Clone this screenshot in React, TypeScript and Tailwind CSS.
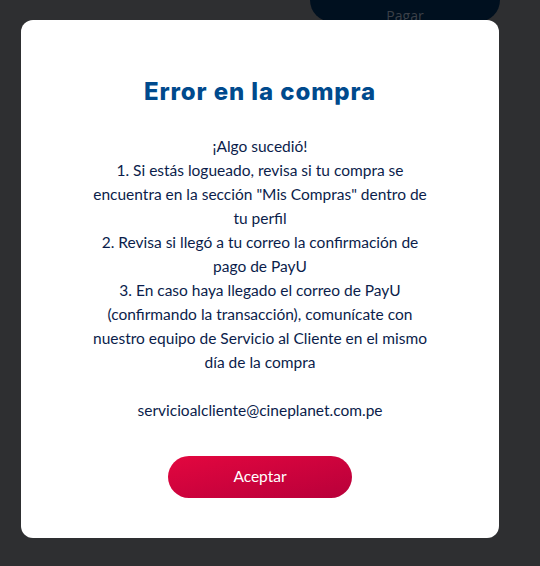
import React from 'react';

const ErrorModal: React.FC = () => {
  return (
    <div className="absolute left-[21px] top-[20px] w-[478px] rounded-[12px] bg-white pt-[56px] pb-[40px] flex flex-col items-center">
      <h2 className="font-['Inter','Open_Sans',sans-serif] text-[24px] leading-[32px] font-extrabold text-[#004a8d] tracking-[0.9px]">
        Error en la compra
      </h2>
      <p className="mt-[26px] w-[344px] text-center font-['Lato','Open_Sans',sans-serif] text-[15.5px] leading-[24px] text-[#0b1d4b]">
        ¡Algo sucedió!
        <br />
        1. Si estás logueado, revisa si tu compra se encuentra en la sección "Mis Compras" dentro de tu perfil
        <br />
        2. Revisa si llegó a tu correo la confirmación de pago de PayU
        <br />
        3. En caso haya llegado el correo de PayU (confirmando la transacción), comunícate con nuestro equipo de Servicio al Cliente en el mismo día de la compra
        <br />
        <br />
        servicioalcliente@cineplanet.com.pe
      </p>
      <button className="mt-[34px] w-[184px] h-[42px] rounded-full bg-gradient-to-br from-[#e3073f] to-[#b8003a] text-white font-['Lato','Open_Sans',sans-serif] text-[15.5px]">
        Aceptar
      </button>
    </div>
  );
};

const App: React.FC = () => {
  return (
    <div className="relative w-[540px] h-[566px] overflow-hidden bg-[#2e2f31]">
      <div className="flex justify-end pr-[40px]">
        <button className="w-[190px] h-[22px] rounded-b-[22px] bg-[#00101f] text-[#3b4048] font-['Open_Sans',sans-serif] text-[14px] leading-[16px] pt-[8px] flex justify-center items-start">
          Pagar
        </button>
      </div>
      <ErrorModal />
    </div>
  );
};

export default App;
